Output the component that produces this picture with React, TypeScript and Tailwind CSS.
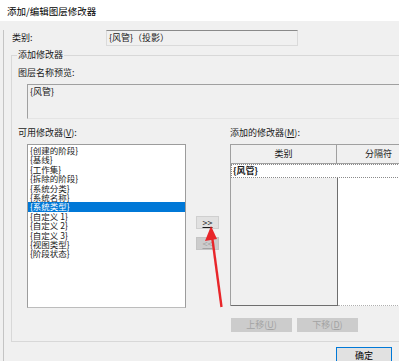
const font = { fontFamily: '"Noto Sans CJK SC", "Liberation Sans", sans-serif' };

const items = [
  "{创建的阶段}",
  "{基线}",
  "{工作集}",
  "{拆除的阶段}",
  "{系统分类}",
  "{系统名称}",
  "{系统类型}",
  "{自定义 1}",
  "{自定义 2}",
  "{自定义 3}",
  "{视图类型}",
  "{阶段状态}",
];

function Arrow() {
  return (
    <svg className="absolute left-0 top-0 pointer-events-none" width="399" height="361">
      <line x1="221.5" y1="307" x2="212" y2="236" stroke="#e8262a" strokeWidth="2.4" />
      <polygon points="211,226 205,241 217,239" fill="#e8262a" />
    </svg>
  );
}

export default function App() {
  return (
    <div
      className="relative w-[399px] h-[361px] overflow-hidden bg-[#f0f0f0] text-[9px] text-[#1a1a1a] leading-[12px]"
      style={font}
    >
      {/* title bar */}
      <div className="h-[21px] bg-white pl-[7px] flex items-center text-[9.5px] text-black">
        添加/编辑图层修改器
      </div>

      <div className="ml-[3px] border-l border-[#c4c4c4] h-[340px]">
        {/* 类别 */}
        <div className="mt-[9px] h-[16px] flex items-center">
          <div className="w-[102px] pl-[8px]">类别:</div>
          <div className="w-[192px] h-[16px] border border-[#dadada] border-t-[#8a8a8a] bg-[#f0f0f0] pl-[2px] flex items-center">
            {"{风管}（投影）"}
          </div>
        </div>

        {/* group box */}
        <div className="relative mt-[9px] ml-[7px] w-[420px] border-t border-l border-b border-[#d8d8d8] pb-[9px]">
          <div className="absolute -top-[7px] left-[5px] bg-[#f0f0f0] px-[1px]">添加修改器</div>

          <div className="mt-[11px] pl-[6px]">图层名称预览:</div>
          <div className="mt-[5px] ml-[15px] h-[35px] border-t border-l border-b border-[#a0a0a0] border-b-[#e4e4e4] pl-[2px] pt-[1px]">
            {"{风管}"}
          </div>

          <div className="mt-[8px] flex">
            <div className="w-[218px] pl-[6px]">可用修改器(<span className="underline">V</span>):</div>
            <div>添加的修改器(<span className="underline">M</span>):</div>
          </div>

          <div className="mt-[5px] flex">
            {/* list */}
            <div className="ml-[15px] w-[159px] h-[164px] bg-white border border-[#9c9c9c] border-b-[#bcbcbc] pt-[1px] text-[8.5px]">
              {items.map((t, i) => (
                <div
                  key={t}
                  className={
                    i === 6
                      ? "h-[9.4px] leading-[9.4px] pl-[2px] bg-[#0078d7] text-white"
                      : "h-[9.4px] leading-[9.4px] pl-[2px]"
                  }
                >
                  {t}
                </div>
              ))}
            </div>

            {/* move buttons */}
            <div className="ml-[10px] w-[23px] flex flex-col">
              <div className="mt-[72px] h-[13px] bg-[#e1e1e1] border border-[#cfcfcf] flex items-center justify-center">
                <span className="underline">&gt;&gt;</span>
              </div>
              <div className="mt-[8px] h-[13px] bg-[#cccccc] border border-[#c4c4c4] flex items-center justify-center text-[#a3a3a3]">
                <span className="underline">&lt;&lt;</span>
              </div>
            </div>

            {/* table */}
            <div className="ml-[11px] w-[200px] h-[162px] flex flex-col border-t border-l border-[#a0a0a0]">
              <div className="h-[19px] flex border-b border-[#a0a0a0] shrink-0">
                <div className="w-[106px] border-r border-[#a0a0a0] flex items-center justify-center">类别</div>
                <div className="flex-1 flex items-center pl-[28px]">分隔符</div>
              </div>
              <div className="relative flex-1 flex">
                <div className="w-[107px] h-full bg-[#f0f0f0] border-r border-b border-[#6e6e6e]" />
                <div className="flex-1 h-full bg-white border-b border-dotted border-[#b0b0b0]" />
                <div className="absolute left-0 top-0 w-full h-[14px] bg-white border border-dotted border-[#8a8a8a] pl-[1px] font-bold leading-[12px]">
                  {"{风管}"}
                </div>
              </div>
            </div>
          </div>

          {/* up / down */}
          <div className="mt-[10px] ml-[219px] flex gap-[5px] text-[#a3a3a3]">
            <div className="w-[61px] h-[14px] bg-[#cccccc] flex items-center justify-center">
              上移(<span className="underline">U</span>)
            </div>
            <div className="w-[61px] h-[14px] bg-[#cccccc] flex items-center justify-center">
              下移(<span className="underline">D</span>)
            </div>
          </div>
        </div>

        {/* OK */}
        <div className="mt-[5px] ml-[332px] w-[56px] h-[18px] bg-[#e1e1e1] border border-[#0078d7] flex items-center justify-center text-black">
          确定
        </div>
      </div>

      <Arrow />
    </div>
  );
}
